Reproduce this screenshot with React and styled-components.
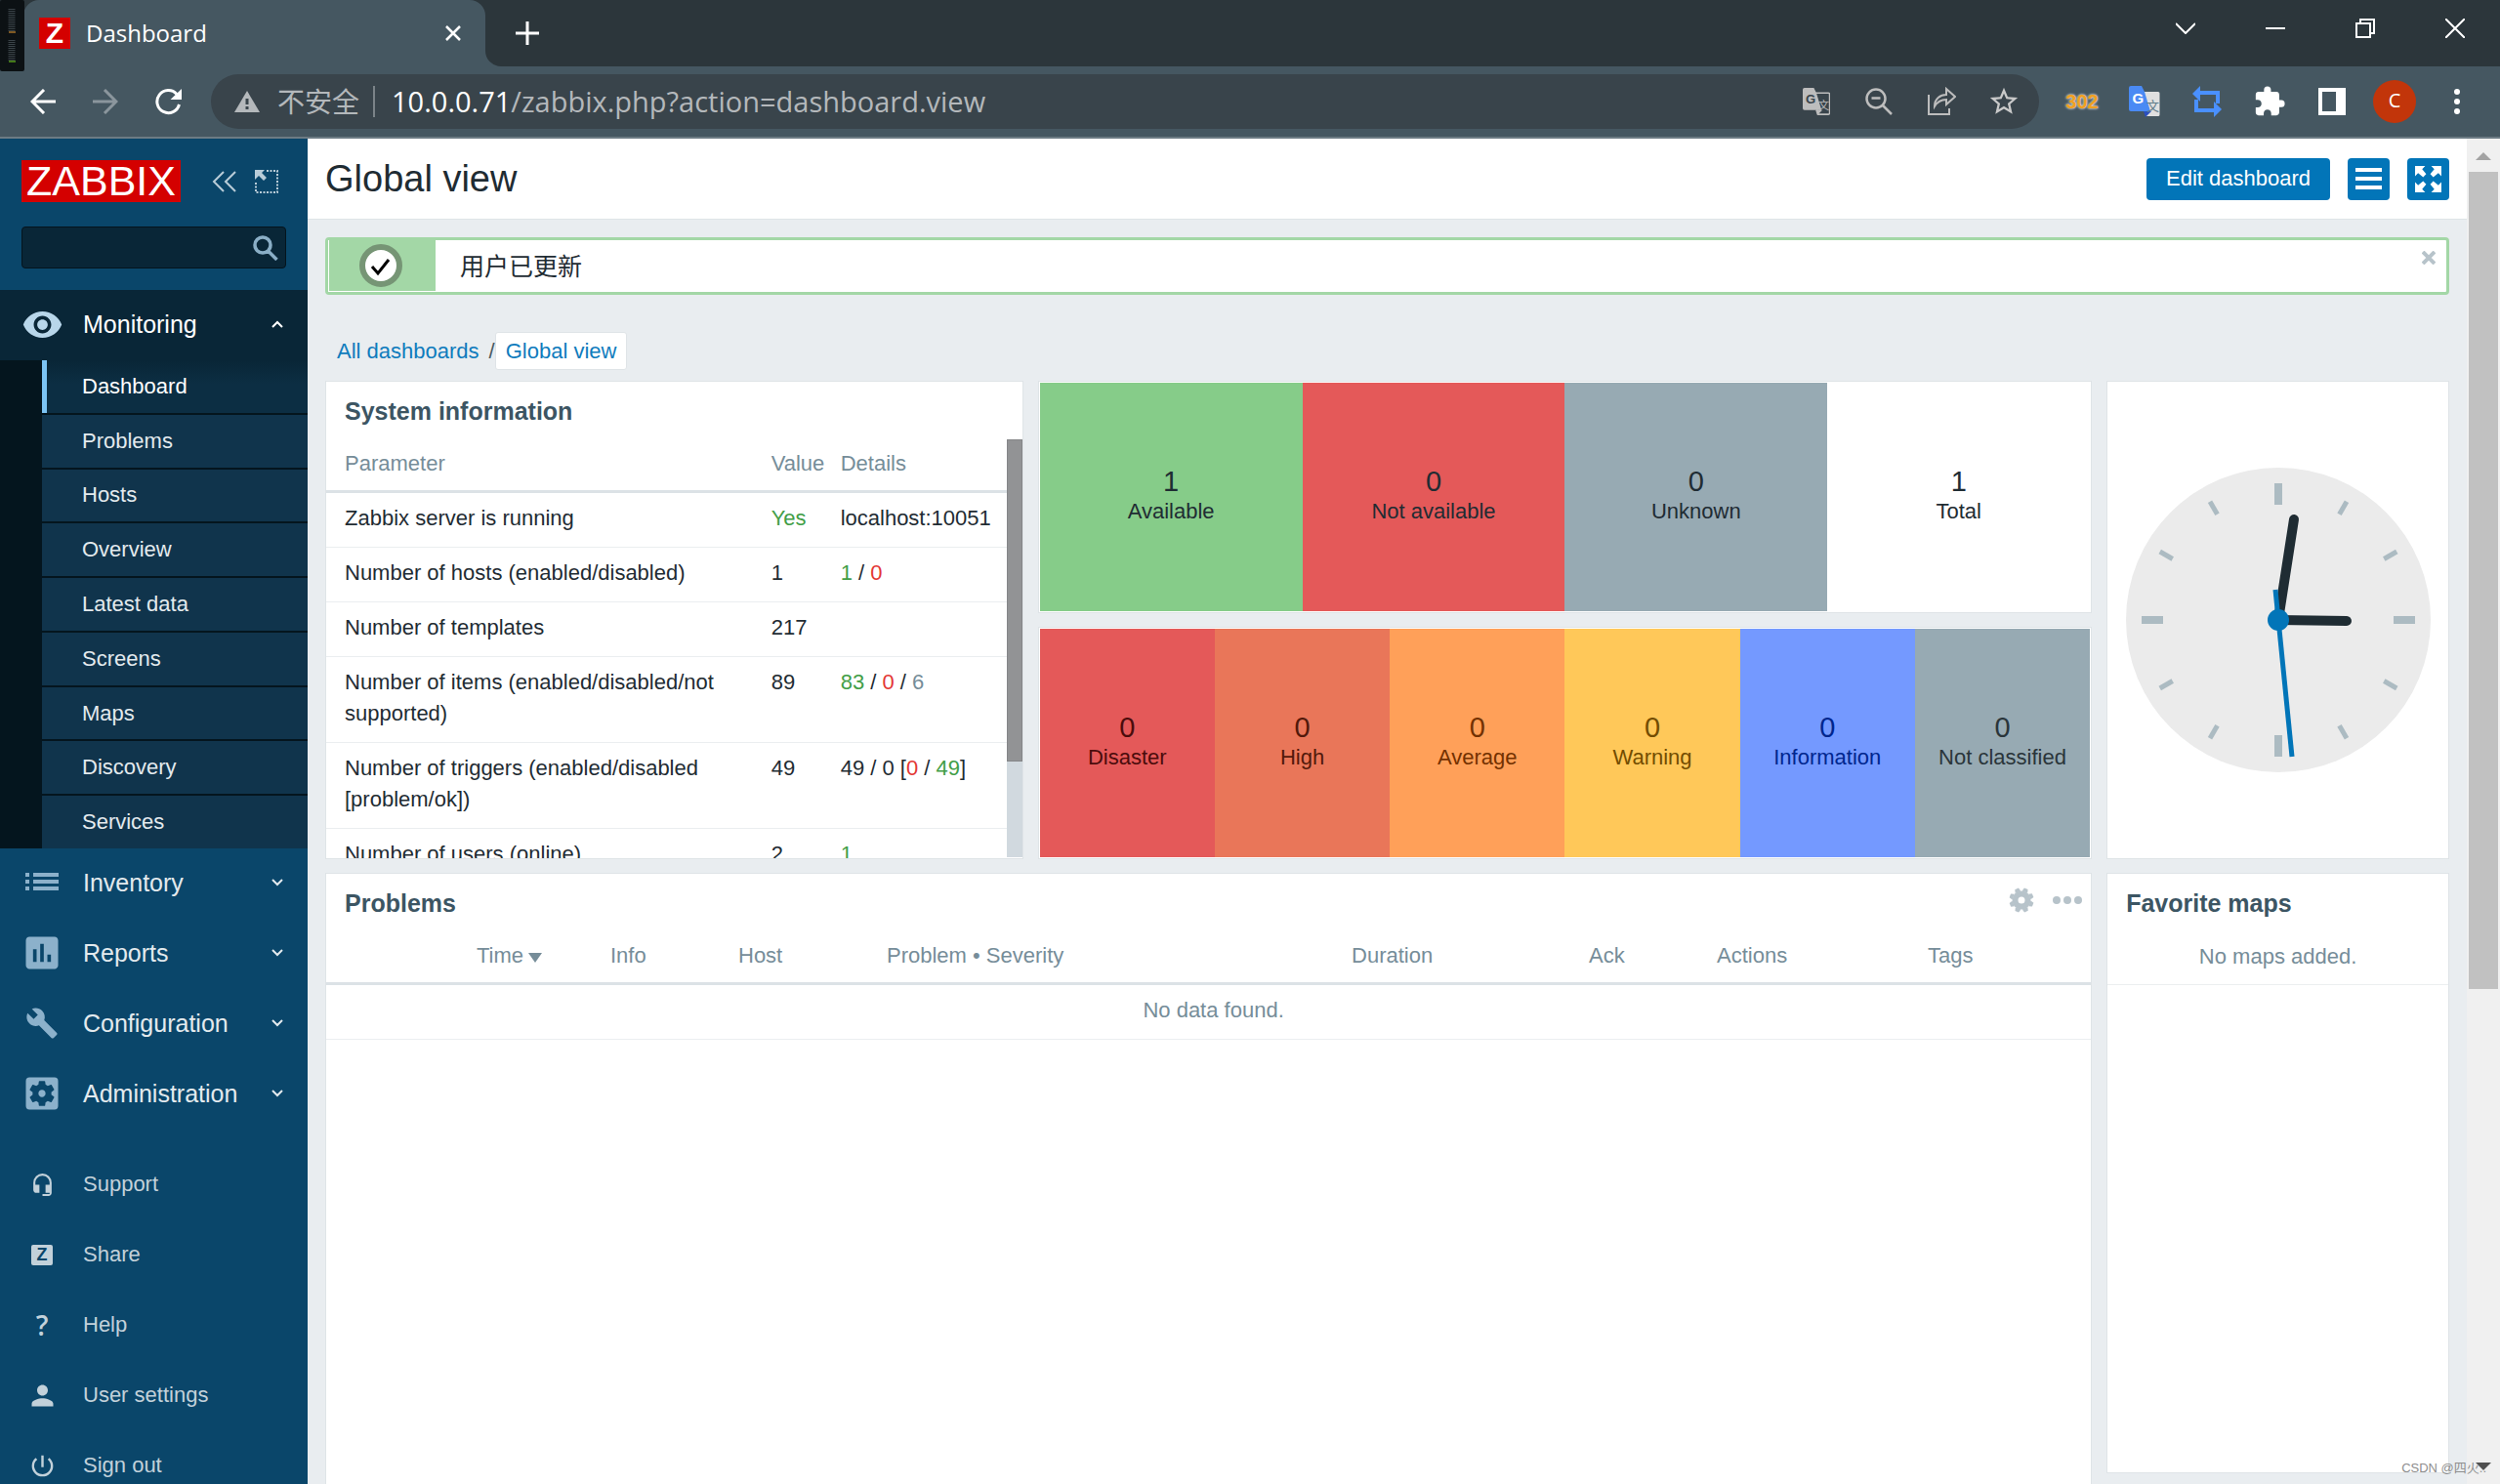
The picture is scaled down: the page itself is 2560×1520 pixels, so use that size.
import React from "react";
import styled, { createGlobalStyle, css } from "styled-components";
import {
  MdVisibility,
  MdAssessment,
  MdBuild,
  MdSettingsApplications,
  MdHeadsetMic,
  MdPerson,
  MdPowerSettingsNew,
  MdExtension,
  MdStarBorder,
} from "react-icons/md";

const GlobalStyle = createGlobalStyle`
  *, *::before, *::after { box-sizing: border-box; }
  body {
    margin: 0;
    font-family: "Liberation Sans", Arial, "Noto Sans CJK SC", sans-serif;
    font-size: 22px;
    line-height: 32px;
    color: #1f2c33;
    background: #e9edf0;
  }
  button, input { font: inherit; }
  a { color: inherit; text-decoration: none; }
  ul { list-style: none; margin: 0; padding: 0; }
  h1, h2 { margin: 0; }
  svg { display: block; flex: none; }
`;

const chromeFont = css`
  font-family: "Open Sans", "Noto Sans", "Noto Sans CJK SC", sans-serif;
`;

/* ---------- browser frame ---------- */

const Browser = styled.div`
  position: relative;
  display: flex;
  flex-direction: column;
  height: 100vh;
  overflow: hidden;
`;

const PlainButton = styled.button`
  display: flex;
  align-items: center;
  justify-content: center;
  padding: 0;
  border: 0;
  background: none;
  color: inherit;
  cursor: pointer;
`;

const TabStrip = styled.div`
  ${chromeFont}
  display: flex;
  flex: none;
  align-items: stretch;
  height: 68px;
  padding-left: 24px;
  background: #2c363b;
  color: #fff;
`;

const Tab = styled.div`
  display: flex;
  align-items: center;
  gap: 16px;
  width: 473px;
  padding: 0 20px 0 16px;
  border-radius: 16px 16px 0 0;
  background: #455761;
  font-size: 24px;
`;

const TabFoot = styled.svg`
  align-self: flex-end;
`;

const TabTitle = styled.span`
  flex: 1;
`;

const Favicon = styled.span`
  width: 32px;
  height: 32px;
  background: #d40000;
  font: bold 30px/32px "Liberation Sans", Arial, sans-serif;
  text-align: center;
`;

const TabButton = styled(PlainButton)`
  width: 26px;
`;

const NewTab = styled(PlainButton)`
  width: 34px;
  margin-left: 10px;
`;

const WindowControls = styled.div`
  display: flex;
  margin-left: auto;
  height: 58px;
`;

const WindowButton = styled(PlainButton)`
  width: 92px;
`;

const Toolbar = styled.div`
  ${chromeFont}
  display: flex;
  flex: none;
  align-items: center;
  gap: 12px;
  height: 74px;
  padding: 0 12px;
  border-bottom: 2px solid #6c7b84;
  background: #455761;
  color: #fff;
`;

const ToolGroup = styled.div`
  display: flex;
`;

const ToolButton = styled(PlainButton)`
  width: 64px;
  height: 56px;
  color: ${(p) => p.$color || "#fff"};
`;

const Omnibox = styled.div`
  display: flex;
  flex: 1;
  align-items: center;
  height: 56px;
  padding: 0 4px 0 24px;
  border-radius: 28px;
  background: #39444b;
  color: #b4b8bb;
  font-size: 28px;
  white-space: nowrap;
`;

const Insecure = styled.span`
  display: flex;
  align-items: center;
  gap: 18px;
  padding-right: 14px;
`;

const Url = styled.span`
  flex: 1;
  padding-left: 17px;
  border-left: 2px solid #7b8388;
  font-size: 29px;
  b {
    color: #fff;
    font-weight: 400;
  }
`;

const Badge302 = styled.span`
  color: #f0a020;
  font: bold 20px/24px "Liberation Sans", Arial, sans-serif;
  text-shadow: 0 0 2px #dcdcdc, 0 0 3px #dcdcdc;
`;

const Avatar = styled.span`
  width: 44px;
  height: 44px;
  border-radius: 50%;
  background: #c2350a;
  font-size: 20px;
  line-height: 42px;
  text-align: center;
`;

const LevelMeter = styled.svg`
  position: absolute;
  top: 0;
  left: 0;
`;

const Watermark = styled.span`
  position: absolute;
  right: 14px;
  bottom: 6px;
  color: #8e8e8e;
  font-size: 13px;
  line-height: 20px;
`;

/* ---------- page ---------- */

const Page = styled.div`
  display: flex;
  flex: 1;
  min-height: 0;
`;

const Scrollbar = styled.div`
  display: flex;
  flex-direction: column;
  align-items: center;
  width: 34px;
  padding: 14px 0;
  background: #f0f0f0;
`;

const ScrollThumb = styled.div`
  width: 30px;
  height: 62%;
  margin: 12px 0 auto;
  background: #c1c1c1;
`;

/* ---------- sidebar ---------- */

const Sidebar = styled.aside`
  flex: none;
  width: 315px;
  overflow: hidden;
  background: #0a466a;
  color: #e3eaee;
`;

const SidebarTop = styled.div`
  padding: 22px;
`;

const LogoRow = styled.div`
  display: flex;
  align-items: center;
  margin-bottom: 25px;
  color: #b9ccd8;
`;

const Logo = styled.a`
  flex: none;
  width: 163px;
  margin-right: 31px;
  background: #d40000;
  color: #fff;
  font-size: 43px;
  line-height: 43px;
  text-align: center;
`;

const SideToggle = styled(PlainButton)`
  flex: none;
  width: 26px;
  height: 26px;
  margin-right: 18px;
`;

const SearchBox = styled.form`
  display: flex;
  align-items: center;
  height: 43px;
  padding-right: 7px;
  border: 1px solid #04141d;
  border-radius: 4px;
  background: #092637;
  color: #8aaec6;
`;

const SearchInput = styled.input`
  flex: 1;
  min-width: 0;
  height: 41px;
  border: 0;
  outline: 0;
  background: none;
  color: #fff;
`;

const NavLink = styled.a`
  display: flex;
  align-items: center;
  gap: 21px;
  height: 72px;
  padding: 0 25px 2px 22px;
  background: ${(p) => (p.$open ? "#092637" : "none")};
  color: ${(p) => (p.$open ? "#fff" : "#e3eaee")};
  font-size: 25px;
`;

const NavIcon = styled.span`
  display: flex;
  justify-content: center;
  width: 42px;
  color: ${(p) => (p.$open ? "#b8d6ea" : "#8cb1cb")};
`;

const NavText = styled.span`
  flex: 1;
`;

const SubNav = styled.ul`
  display: grid;
  grid-auto-rows: 1fr;
  row-gap: 2px;
  height: 500px;
  padding-left: 43px;
  background: #04151e;
`;

const SubLink = styled.a`
  display: flex;
  align-items: center;
  height: 100%;
  padding-left: 36px;
  border-left: 5px solid ${(p) => (p.$active ? "#7cc4f4" : "#10344c")};
  background: ${(p) => (p.$active ? "linear-gradient(#092637, #0c2e43 24px)" : "#10344c")};
  color: ${(p) => (p.$active ? "#fff" : "#e3eaee")};
`;

const UserNav = styled.ul`
  padding-top: 20px;
`;

const UserLink = styled.a`
  display: flex;
  align-items: center;
  gap: 21px;
  height: 72px;
  padding-left: 22px;
  color: #c2d1da;
`;

const UserIcon = styled.span`
  display: flex;
  justify-content: center;
  width: 42px;
`;

const ShareMark = styled.span`
  width: 22px;
  height: 21px;
  border-radius: 2px;
  background: #c2d1da;
  color: #0a466a;
  font-size: 18px;
  font-weight: 700;
  line-height: 21px;
  text-align: center;
`;

const HelpMark = styled.span`
  font: 600 28px/28px "Open Sans", "Noto Sans", sans-serif;
`;

/* ---------- main ---------- */

const Main = styled.main`
  flex: 1;
  min-width: 0;
  overflow: hidden;
`;

const Header = styled.header`
  display: flex;
  align-items: center;
  gap: 18px;
  height: 83px;
  padding: 0 18px;
  border-bottom: 1px solid #dfe4e7;
  background: #fff;
`;

const PageTitle = styled.h1`
  flex: 1;
  font-size: 38px;
  font-weight: 400;
`;

const BlueButton = styled(PlainButton)`
  height: 43px;
  padding: 0 ${(p) => (p.$icon ? "7px" : "20px")};
  border-radius: 4px;
  background: #0275b8;
  color: #fff;
`;

const Content = styled.div`
  padding: 18px;
`;

const Message = styled.div`
  display: flex;
  align-items: stretch;
  height: 59px;
  margin-bottom: 38px;
  border: 3px solid #a3d7a6;
  border-radius: 4px;
  background: #fff;
  font-size: 25px;
`;

const MessageMark = styled.span`
  display: flex;
  align-items: center;
  justify-content: center;
  width: 110px;
  padding-right: 4px;
  border: solid #fff;
  border-width: 0 0 1px 1px;
  background: #a3d7a6;
`;

const MessageText = styled.span`
  flex: 1;
  align-self: center;
  padding-left: 25px;
`;

const MessageClose = styled(PlainButton)`
  width: 36px;
  height: 36px;
  color: #b7c3ca;
`;

const Crumbs = styled.nav`
  display: flex;
  align-items: center;
  margin-bottom: 11px;
  padding-left: 12px;
  color: #4b5a62;
`;

const Crumb = styled.a`
  margin-right: 10px;
  color: #0f7cbd;
`;

const CurrentCrumb = styled.a`
  height: 39px;
  padding: 3px 10px;
  border: 1px solid #dfe4e7;
  border-radius: 3px;
  background: #fff;
  color: #0f7cbd;
`;

const Dashboard = styled.div`
  display: grid;
  grid-template-columns: 715fr 1080fr 351fr;
  grid-template-rows: 238px 238px auto;
  gap: 14px 15px;
`;

const Widget = styled.section`
  display: flex;
  flex-direction: column;
  min-width: 0;
  height: ${(p) => p.$height || "auto"};
  grid-column: span ${(p) => p.$cols || 1};
  grid-row: span ${(p) => p.$rows || 1};
  border: 1px solid #dfe4e7;
  background: #fff;
  overflow: hidden;
`;

const WidgetHead = styled.div`
  display: flex;
  flex: none;
  align-items: flex-start;
  gap: 18px;
  height: 59px;
  padding: 14px 8px 0 19px;
  color: #b7c3ca;
`;

const WidgetTitle = styled.h2`
  flex: 1;
  color: #3c5563;
  font-size: 25px;
  font-weight: 700;
`;

const HeadButton = styled(PlainButton)`
  height: 26px;
`;

const WidgetScroll = styled.div`
  display: flex;
  flex: 1;
  min-height: 0;
  padding-bottom: 1px;
  overflow: hidden;
`;

const InnerBar = styled.div`
  flex: none;
  width: 16px;
  background: #d1d9df;
`;

const InnerThumb = styled.div`
  height: 77%;
  border: 1px solid #858688;
  background: #929395;
`;

const DataTable = styled.table`
  flex: 1;
  align-self: flex-start;
  width: 100%;
  table-layout: fixed;
  border-collapse: collapse;
  th, td {
    padding: 10px 9px 13px;
    text-align: left;
    vertical-align: top;
  }
  th {
    padding: 9px 9px 11px;
    border-bottom: 3px solid #dce2e6;
    color: #768d99;
    font-weight: 400;
  }
  td { border-bottom: 1px solid #ebeef0; }
  th:first-child, td:first-child { padding-left: 19px; }
`;

const EmptyCell = styled.td`
  && {
    color: #768d99;
    text-align: center;
  }
`;

const EmptyNote = styled.p`
  margin: 0;
  padding: 10px 0 12px;
  border-bottom: 1px solid #ebeef0;
  color: #768d99;
  text-align: center;
`;

const Tone = styled.span`
  color: ${(p) => ({ green: "#429e47", red: "#e33734", grey: "#768d99" })[p.$tone]};
`;

const Tiles = styled.div`
  display: grid;
  grid-auto-columns: 1fr;
  grid-auto-flow: column;
  flex: 1;
  padding: 1px;
`;

const Tile = styled.a`
  display: flex;
  flex-direction: column;
  align-items: center;
  justify-content: center;
  background: ${(p) => p.$bg};
  color: ${(p) => p.$fg};
`;

const TileCount = styled.span`
  font-size: 29px;
  line-height: 30px;
`;

const TileLabel = styled.span`
  line-height: 32px;
`;

const ClockWrap = styled.div`
  display: flex;
  flex: 1;
  align-items: center;
  justify-content: center;
`;

/* ---------- data ---------- */

const subItems = [
  "Dashboard", "Problems", "Hosts", "Overview", "Latest data",
  "Screens", "Maps", "Discovery", "Services",
];

const hostTiles = [
  [1, "Available", "#86cc89", "#1f2c33"],
  [0, "Not available", "#e45959", "#1f2c33"],
  [0, "Unknown", "#97aab3", "#1f2c33"],
  [1, "Total", "#ffffff", "#1f2c33"],
];

const severityTiles = [
  [0, "Disaster", "#e45959", "#4b0c0c"],
  [0, "High", "#e97659", "#52190b"],
  [0, "Average", "#ffa059", "#733100"],
  [0, "Warning", "#ffc859", "#734d00"],
  [0, "Information", "#7499ff", "#00268e"],
  [0, "Not classified", "#97aab3", "#2a353a"],
];

const problemColumns = [
  ["", 145], ["Time", 137], ["Info", 131], ["Host", 152], ["Problem • Severity", 476],
  ["Duration", 243], ["Ack", 131], ["Actions", 216], ["Tags", 176],
];

const G = (p) => <Tone $tone="green">{p.children}</Tone>;
const R = (p) => <Tone $tone="red">{p.children}</Tone>;

const infoRows = [
  ["Zabbix server is running", <G>Yes</G>, "localhost:10051"],
  ["Number of hosts (enabled/disabled)", "1", <><G>1</G> / <R>0</R></>],
  ["Number of templates", "217", ""],
  ["Number of items (enabled/disabled/not supported)", "89",
    <><G>83</G> / <R>0</R> / <Tone $tone="grey">6</Tone></>],
  ["Number of triggers (enabled/disabled [problem/ok])", "49",
    <>49 / 0 [<R>0</R> / <G>49</G>]</>],
  ["Number of users (online)", "2", <G>1</G>],
];

/* ---------- drawings ---------- */

function Stroke({ w, h = w, vb, d, sw = 2, ...rest }) {
  return (
    <svg width={w} height={h} viewBox={vb || `0 0 ${w} ${h}`} fill="none"
      stroke="currentColor" strokeWidth={sw} aria-hidden="true" {...rest}>
      <path d={d} />
    </svg>
  );
}

function ListIcon() {
  return (
    <svg width="34" height="20" viewBox="0 0 34 20" fill="currentColor" aria-hidden="true">
      {[0, 7, 14].map((y) => (
        <g key={y}>
          <rect x="0" y={y} width="4" height="4" />
          <rect x="8" y={y} width="26" height="4" />
        </g>
      ))}
    </svg>
  );
}

function TranslateIcon({ coloured }) {
  return (
    <svg width={coloured ? 32 : 28} height={coloured ? 32 : 28} viewBox="0 0 32 32" aria-hidden="true"
      fontFamily="Liberation Sans, Noto Sans CJK SC, sans-serif">
      <path d="M13 6h17a1.500 1.500 0 0 1 1.500 1.500v22a1.500 1.500 0 0 1-1.500 1.500H18z"
        fill={coloured ? "#e0e0e0" : "none"} stroke={coloured ? "none" : "#bdbdbd"} strokeWidth="1.800" />
      <path d="M15 26h8l-6 6z" fill={coloured ? "#2a4fc0" : "#bdbdbd"} />
      <path d="M2 0h11l3 6 6 20H2a2 2 0 0 1-2-2V2a2 2 0 0 1 2-2z" fill={coloured ? "#4a8af4" : "#bdbdbd"} />
      <text x="3.500" y="18" fontSize="15" fontWeight="700" fill={coloured ? "#fff" : "#39444b"}>G</text>
      <text x="18" y="25" fontSize="13" fill={coloured ? "#607d8b" : "#bdbdbd"}>文</text>
    </svg>
  );
}

function GearIcon() {
  const teeth = [0, 45, 90, 135, 180, 225, 270, 315];
  return (
    <svg width="26" height="26" viewBox="-13 -13 26 26" aria-hidden="true">
      <circle r="6.500" fill="none" stroke="currentColor" strokeWidth="6" />
      {teeth.map((a) => (
        <path key={a} d="M-3-9l1-3.600h4l1 3.600z" transform={`rotate(${a + 22})`} fill="currentColor" />
      ))}
    </svg>
  );
}

function Clock() {
  const marks = Array.from({ length: 12 }, (_, i) => i);
  return (
    <svg width="312" height="312" viewBox="-156 -156 312 312" role="img" aria-label="Clock">
      <circle r="156" fill="#ebebeb" />
      {marks.map((i) => (
        <path key={i} d={i % 3 ? "M0-140V-125" : "M0-140V-118"} transform={`rotate(${i * 30})`}
          stroke="#acbbc2" strokeWidth={i % 3 ? 5 : 8} />
      ))}
      <g stroke="#1f2c33" strokeWidth="10" strokeLinecap="round">
        <path d="M0 0L70 1" />
        <path d="M0 0L16-103" />
      </g>
      <path d="M-3-31L14 140" stroke="#0275b8" strokeWidth="5" />
      <circle r="11" fill="#0275b8" />
    </svg>
  );
}

function Chevron({ up }) {
  return <Stroke w={12} h={8} d={up ? "M1 7l5-5 5 5" : "M1 1l5 5 5-5"} />;
}

function NavEntry({ icon, text, open }) {
  return (
    <NavLink href="#" $open={open}>
      <NavIcon $open={open}>{icon}</NavIcon>
      <NavText>{text}</NavText>
      <Chevron up={open} />
    </NavLink>
  );
}

function TileSet({ tiles }) {
  return (
    <Tiles>
      {tiles.map(([count, label, bg, fg]) => (
        <Tile key={label} href="#" $bg={bg} $fg={fg}>
          <TileCount>{count}</TileCount>
          <TileLabel>{label}</TileLabel>
        </Tile>
      ))}
    </Tiles>
  );
}

/* ---------- sections ---------- */

function BrowserFrame() {
  return (
    <>
      <TabStrip>
        <Tab>
          <Favicon>Z</Favicon>
          <TabTitle>Dashboard</TabTitle>
          <TabButton aria-label="Close tab">
            <Stroke w={18} d="M2 2l14 14M16 2L2 16" sw={2.5} />
          </TabButton>
        </Tab>
        <TabFoot width="16" height="16" viewBox="0 0 16 16" aria-hidden="true">
          <path d="M0 0v16h16A16 16 0 0 1 0 0z" fill="#455761" />
        </TabFoot>
        <NewTab aria-label="New tab"><Stroke w={24} d="M12 0v24M0 12h24" sw={3} /></NewTab>
        <WindowControls>
          <WindowButton aria-label="Search tabs"><Stroke w={20} h={12} d="M0 1l10 10L20 1" /></WindowButton>
          <WindowButton aria-label="Minimize"><Stroke w={20} h={2} d="M0 1h20" /></WindowButton>
          <WindowButton aria-label="Restore">
            <Stroke w={20} d="M1 5h14v14H1zM5 5V1h14v14h-4" />
          </WindowButton>
          <WindowButton aria-label="Close window"><Stroke w={20} d="M0 0l20 20M20 0L0 20" /></WindowButton>
        </WindowControls>
      </TabStrip>
      <Toolbar>
        <ToolGroup>
          <ToolButton aria-label="Back"><Stroke w={26} d="M26 13H2M14 1L2 13l12 12" sw={3} /></ToolButton>
          <ToolButton aria-label="Forward" $color="#8b969d">
            <Stroke w={26} d="M0 13h24M12 1l12 12-12 12" sw={3} />
          </ToolButton>
          <ToolButton aria-label="Reload">
            <svg width="28" height="28" viewBox="0 0 28 28" aria-hidden="true">
              <path d="M23 6.500A11.500 11.500 0 1 0 25.500 17" fill="none" stroke="currentColor" strokeWidth="3" />
              <path d="M28 1v11H16.500z" fill="currentColor" />
            </svg>
          </ToolButton>
        </ToolGroup>
        <Omnibox>
          <Insecure>
            <svg width="26" height="22" viewBox="0 0 26 22" aria-hidden="true">
              <path d="M13 0l13 22H0z" fill="#b4b8bb" />
              <path d="M13 8v6M13 16v3" stroke="#39444b" strokeWidth="3" />
            </svg>
            不安全
          </Insecure>
          <Url><b>10.0.0.71</b>/zabbix.php?action=dashboard.view</Url>
          <ToolButton aria-label="Translate" $color="#bdbdbd"><TranslateIcon /></ToolButton>
          <ToolButton aria-label="Zoom" $color="#bdbdbd">
            <Stroke w={28} d="M20.500 11a9.500 9.500 0 1 1-19 0a9.500 9.500 0 0 1 19 0zM18 18l9 9M6.500 10.500h9" sw={2.5} />
          </ToolButton>
          <ToolButton aria-label="Share" $color="#bdbdbd">
            <Stroke w={30} d="M2 8v20h21v-6M8 20c0-8 6-12 12-12V2l9 8-9 8v-5c-6 0-9 2-12 7z" />
          </ToolButton>
          <ToolButton aria-label="Bookmark" $color="#c9c9c9"><MdStarBorder size={34} /></ToolButton>
        </Omnibox>
        <ToolGroup>
          <ToolButton aria-label="Redirects"><Badge302>302</Badge302></ToolButton>
          <ToolButton aria-label="Translator"><TranslateIcon coloured /></ToolButton>
          <ToolButton aria-label="Proxy" $color="#4a90ff">
            <svg width="30" height="32" viewBox="0 0 30 32" fill="currentColor" aria-hidden="true">
              <path d="M0 8l8-8v5h20v13h-4V9H8v7z" />
              <path d="M30 24l-8 8v-5H2V14h4v9h16v-7z" />
            </svg>
          </ToolButton>
          <ToolButton aria-label="Extensions"><MdExtension size={34} /></ToolButton>
          <ToolButton aria-label="Side panel">
            <svg width="28" height="28" viewBox="0 0 28 28" fill="currentColor" aria-hidden="true">
              <path fillRule="evenodd" d="M0 0h28v28H0zM4 4v20h14V4z" />
            </svg>
          </ToolButton>
          <ToolButton aria-label="Profile"><Avatar>C</Avatar></ToolButton>
          <ToolButton aria-label="Menu">
            <svg width="6" height="26" viewBox="0 0 6 26" fill="currentColor" aria-hidden="true">
              <circle cx="3" cy="3" r="3" /><circle cx="3" cy="13" r="3" /><circle cx="3" cy="23" r="3" />
            </svg>
          </ToolButton>
        </ToolGroup>
      </Toolbar>
    </>
  );
}

function SideMenu() {
  return (
    <Sidebar>
      <SidebarTop>
        <LogoRow>
          <Logo href="#">ZABBIX</Logo>
          <SideToggle aria-label="Collapse sidebar">
            <Stroke w={26} d="M13 3L3 13l10 10M25 3L15 13l10 10" />
          </SideToggle>
          <SideToggle aria-label="Hide sidebar">
            <svg width="24" height="24" viewBox="0 0 24 24" aria-hidden="true">
              <path d="M12 1h11v22H1V12" fill="none" stroke="currentColor" strokeWidth="2" strokeDasharray="2 1.500" />
              <path d="M0 0h10L7 3l5 5-3 3-5-5-4 4z" fill="currentColor" />
            </svg>
          </SideToggle>
        </LogoRow>
        <SearchBox>
          <SearchInput type="search" aria-label="Search" />
          <PlainButton aria-label="Search" type="button">
            <Stroke w={26} d="M18 10a8 8 0 1 1-16 0a8 8 0 0 1 16 0zM15.500 16l9 9" sw={3.5} />
          </PlainButton>
        </SearchBox>
      </SidebarTop>
      <nav>
        <NavEntry open text="Monitoring" icon={<MdVisibility size={43} />} />
        <SubNav>
          {subItems.map((t, i) => (
            <li key={t}><SubLink href="#" $active={i === 0}>{t}</SubLink></li>
          ))}
        </SubNav>
        <NavEntry text="Inventory" icon={<ListIcon />} />
        <NavEntry text="Reports" icon={<MdAssessment size={44} />} />
        <NavEntry text="Configuration" icon={<MdBuild size={34} />} />
        <NavEntry text="Administration" icon={<MdSettingsApplications size={44} />} />
      </nav>
      <UserNav>
        <li><UserLink href="#"><UserIcon><MdHeadsetMic size={25} /></UserIcon>Support</UserLink></li>
        <li><UserLink href="#"><UserIcon><ShareMark>Z</ShareMark></UserIcon>Share</UserLink></li>
        <li><UserLink href="#"><UserIcon><HelpMark>?</HelpMark></UserIcon>Help</UserLink></li>
        <li><UserLink href="#"><UserIcon><MdPerson size={33} /></UserIcon>User settings</UserLink></li>
        <li><UserLink href="#"><UserIcon><MdPowerSettingsNew size={29} /></UserIcon>Sign out</UserLink></li>
      </UserNav>
    </Sidebar>
  );
}

function SystemInformation() {
  return (
    <Widget $rows={2}>
      <WidgetHead><WidgetTitle>System information</WidgetTitle></WidgetHead>
      <WidgetScroll>
        <DataTable>
          <colgroup><col /><col width="71" /><col width="179" /></colgroup>
          <thead><tr><th>Parameter</th><th>Value</th><th>Details</th></tr></thead>
          <tbody>
            {infoRows.map(([name, value, details]) => (
              <tr key={name}><td>{name}</td><td>{value}</td><td>{details}</td></tr>
            ))}
          </tbody>
        </DataTable>
        <InnerBar><InnerThumb /></InnerBar>
      </WidgetScroll>
    </Widget>
  );
}

const SortArrow = styled.span`
  display: inline-block;
  margin-left: 5px;
  border: solid transparent;
  border-width: 10px 7px 0;
  border-top-color: #768d99;
`;

function Problems() {
  return (
    <Widget $cols={2} $height="800px">
      <WidgetHead>
        <WidgetTitle>Problems</WidgetTitle>
        <HeadButton aria-label="Edit"><GearIcon /></HeadButton>
        <HeadButton aria-label="Actions">
          <svg width="32" height="8" viewBox="0 0 32 8" fill="currentColor" aria-hidden="true">
            <circle cx="5" cy="4" r="4" /><circle cx="16" cy="4" r="4" /><circle cx="27" cy="4" r="4" />
          </svg>
        </HeadButton>
      </WidgetHead>
      <WidgetScroll>
        <DataTable>
          <colgroup>{problemColumns.map(([n, w]) => <col key={n} width={w} />)}</colgroup>
          <thead>
            <tr>
              {problemColumns.map(([n]) => <th key={n}>{n}{n === "Time" && <SortArrow />}</th>)}
            </tr>
          </thead>
          <tbody><tr><EmptyCell colSpan={9}>No data found.</EmptyCell></tr></tbody>
        </DataTable>
      </WidgetScroll>
    </Widget>
  );
}

export default function App() {
  return (
    <Browser>
      <GlobalStyle />
      <BrowserFrame />
      <Page>
        <SideMenu />
        <Main>
          <Header>
            <PageTitle>Global view</PageTitle>
            <BlueButton>Edit dashboard</BlueButton>
            <BlueButton $icon aria-label="Menu">
              <Stroke w={29} d="M1 5h27M1 14h27M1 23h27" sw={4} />
            </BlueButton>
            <BlueButton $icon aria-label="Full screen">
              <svg width="29" height="29" viewBox="-14 -14 28 28" aria-hidden="true">
                {[0, 90, 180, 270].map((a) => (
                  <path key={a} transform={`rotate(${a})`} fill="currentColor"
                    d="M-13-13h10l-3 3 4 5-3 3-5-4-3 3z" />
                ))}
              </svg>
            </BlueButton>
          </Header>
          <Content>
            <Message role="status">
              <MessageMark>
                <svg width="46" height="46" viewBox="0 0 46 46" aria-hidden="true">
                  <circle cx="23" cy="23" r="19" fill="#fff" stroke="#769575" strokeWidth="6" />
                  <path d="M14 24l6 7 11-14" fill="none" stroke="#000" strokeWidth="3" />
                </svg>
              </MessageMark>
              <MessageText>用户已更新</MessageText>
              <MessageClose aria-label="Close message"><Stroke w={14} d="M1 1l12 12M13 1L1 13" sw={4} /></MessageClose>
            </Message>
            <Crumbs>
              <Crumb href="#">All dashboards</Crumb>
              <span>/</span>
              <CurrentCrumb href="#">Global view</CurrentCrumb>
            </Crumbs>
            <Dashboard>
              <SystemInformation />
              <Widget><TileSet tiles={hostTiles} /></Widget>
              <Widget $rows={2}><ClockWrap><Clock /></ClockWrap></Widget>
              <Widget><TileSet tiles={severityTiles} /></Widget>
              <Problems />
              <Widget $height="615px">
                <WidgetHead><WidgetTitle>Favorite maps</WidgetTitle></WidgetHead>
                <EmptyNote>No maps added.</EmptyNote>
              </Widget>
            </Dashboard>
          </Content>
        </Main>
        <Scrollbar>
          <svg width="16" height="8" viewBox="0 0 16 8" aria-hidden="true"><path d="M8 0l8 8H0z" fill="#a3a3a3" /></svg>
          <ScrollThumb />
          <svg width="16" height="8" viewBox="0 0 16 8" aria-hidden="true"><path d="M8 8l8-8H0z" fill="#505050" /></svg>
        </Scrollbar>
      </Page>
      <LevelMeter width="25" height="73" viewBox="0 0 25 73" aria-hidden="true">
        <rect width="25" height="73" rx="2" fill="#0c1114" />
        <path d="M12 9v23M12 41v22" stroke="#3a4348" strokeWidth="7" strokeDasharray="1 1" />
        <path d="M9 33h7" stroke="#f0a030" strokeWidth="1" />
        <path d="M9 63h7" stroke="#7be01c" strokeWidth="1" />
      </LevelMeter>
      <Watermark>CSDN @四火..</Watermark>
    </Browser>
  );
}
